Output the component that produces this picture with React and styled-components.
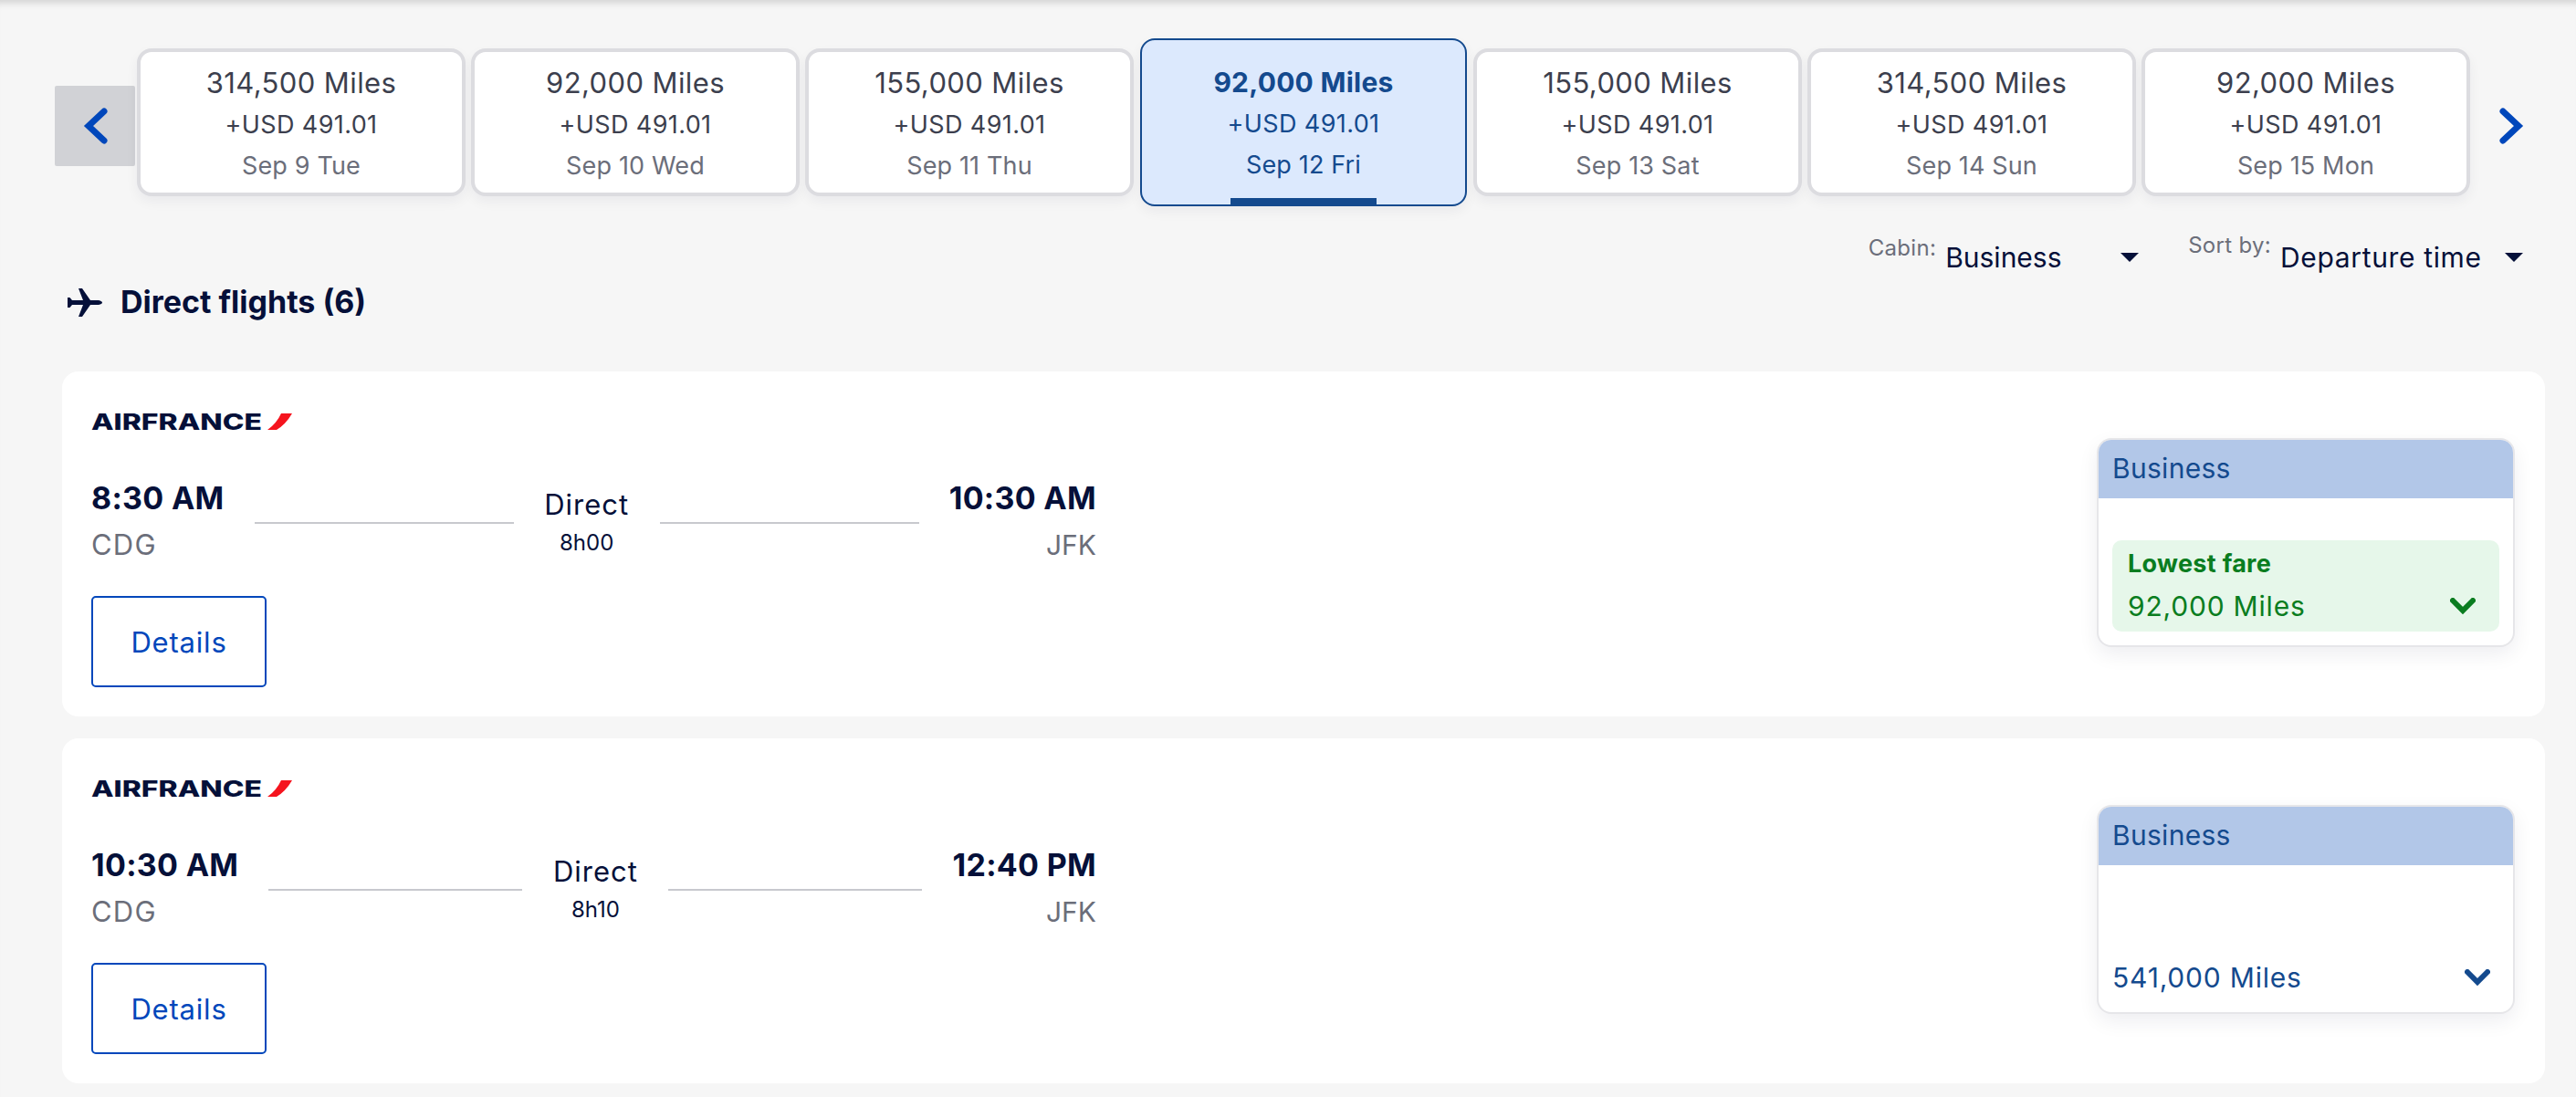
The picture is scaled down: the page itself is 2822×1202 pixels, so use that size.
import React from "react";
import styled, { createGlobalStyle } from "styled-components";

const GlobalStyle = createGlobalStyle`
    * { box-sizing: border-box; }
    html, body { margin: 0; padding: 0; }
    body {
        background: #f6f6f6;
        font-family: Inter, "Noto Sans", "Liberation Sans", sans-serif;
    }
`;

const NAVY = "#051039";
const BLUE = "#0047bb";
const DARK_BLUE = "#144a8e";
const GREEN = "#0a7d20";
const GREY = "#6b6e7a";

const Page = styled.div`
    width: 2822px;
    height: 1202px;
    overflow: hidden;
    padding-top: 42px;
    background: #f6f6f6;
    box-shadow: inset 0 10px 10px -8px rgba(0, 0, 0, 0.18);
`;

const DateStrip = styled.div`
    display: flex;
    align-items: center;
    height: 184px;
    padding-left: 60px;
`;

const PrevButton = styled.div`
    width: 88px;
    height: 88px;
    margin: 8px 2px 0 0;
    background: #d1d2d6;
    border-radius: 2px;
    display: flex;
    align-items: center;
    justify-content: center;
`;

const NextButton = styled.div`
    margin: 8px 0 0 32px;
    display: flex;
`;

const Tiles = styled.div`
    display: flex;
    align-items: center;
    gap: 6px;
`;

const Tile = styled.div`
    position: relative;
    width: ${props => (props.$active ? "358px" : "360px")};
    height: ${props => (props.$active ? "184px" : "162px")};
    margin: ${props => (props.$active ? "0 1px" : "0")};
    padding-top: ${props => (props.$active ? "0" : "2px")};
    background: ${props => (props.$active ? "#dce9fd" : "#ffffff")};
    border: ${props => (props.$active ? `2px solid ${DARK_BLUE}` : "4px solid #dcdce0")};
    border-radius: 16px;
    box-shadow: 0 6px 14px rgba(5, 16, 57, 0.05);
    display: flex;
    flex-direction: column;
    align-items: center;
    justify-content: center;
    color: ${props => (props.$active ? DARK_BLUE : "#3c3f4e")};
`;

const TileMiles = styled.div`
    font-size: ${props => (props.$active ? "30px" : "31px")};
    letter-spacing: ${props => (props.$active ? "0.25px" : "0.4px")};
    line-height: 40px;
    font-weight: ${props => (props.$active ? 700 : 400)};
`;

const TileCash = styled.div`
    font-size: 27px;
    letter-spacing: 0.4px;
    line-height: 36px;
    margin-top: 8px;
`;

const TileDate = styled.div`
    font-size: 27px;
    letter-spacing: 0.15px;
    line-height: 36px;
    margin-top: 9px;
    color: ${props => (props.$active ? DARK_BLUE : GREY)};
`;

const ActiveMark = styled.span`
    position: absolute;
    left: 97px;
    bottom: 0;
    width: 160px;
    height: 7px;
    background: ${DARK_BLUE};
`;

const Toolbar = styled.div`
    display: flex;
    justify-content: flex-end;
    gap: 54px;
    margin-top: 36px;
    padding-right: 58px;
`;

const Control = styled.div`
    display: flex;
    align-items: center;
    height: 40px;
`;

const ControlLabel = styled.span`
    align-self: flex-start;
    margin-top: ${props => props.$raise}px;
    margin-right: 10px;
    font-size: 24px;
    letter-spacing: 0.3px;
    line-height: 24px;
    color: ${GREY};
`;

const ControlValue = styled.span`
    width: ${props => props.$width}px;
    font-size: 30px;
    letter-spacing: ${props => props.$tracking}px;
    line-height: 40px;
    color: ${NAVY};
`;

const Caret = styled.span`
    width: 0;
    height: 0;
    border-left: 10px solid transparent;
    border-right: 10px solid transparent;
    border-top: 10px solid ${NAVY};
`;

const Heading = styled.div`
    display: flex;
    align-items: center;
    gap: 20px;
    margin: 9px 0 0 74px;
    font-size: 34px;
    line-height: 40px;
    font-weight: 700;
    color: ${NAVY};
`;

const FlightList = styled.div`
    display: flex;
    flex-direction: column;
    gap: 24px;
    margin: 56px 34px 0 68px;
`;

const FlightCard = styled.div`
    display: flex;
    justify-content: space-between;
    align-items: flex-start;
    height: 378px;
    padding: 41px 33px 0 32px;
    background: #ffffff;
    border-radius: 18px;
`;

const FlightInfo = styled.div`
    width: 1101px;
`;

const Logo = styled.svg`
    display: block;
    width: 222px;
    height: 28px;
`;

const Schedule = styled.div`
    display: flex;
    align-items: flex-start;
    margin-top: 50px;
`;

const Stop = styled.div`
    text-align: ${props => (props.$end ? "right" : "left")};
`;

const Time = styled.div`
    font-size: 34px;
    letter-spacing: 0.3px;
    line-height: 40px;
    font-weight: 700;
    color: ${NAVY};
`;

const Airport = styled.div`
    margin-top: 13px;
    font-size: ${props => (props.$end ? "30px" : "31px")};
    letter-spacing: ${props => (props.$end ? "0" : "1.2px")};
    line-height: 36px;
    color: ${GREY};
`;

const Route = styled.span`
    flex: 1;
    height: 2px;
    margin: 46px 33px 0;
    background: #c8c9ce;
`;

const Duration = styled.div`
    width: 160px;
    margin: 0 -33px;
    padding-top: 9px;
    text-align: center;
    color: ${NAVY};
`;

const DirectLabel = styled.div`
    font-size: 31px;
    letter-spacing: 1px;
    line-height: 36px;
`;

const DurationValue = styled.div`
    margin-top: 9px;
    font-size: 24px;
    line-height: 30px;
`;

const DetailsButton = styled.div`
    width: 192px;
    height: 100px;
    margin-top: 38px;
    border: 2.5px solid ${BLUE};
    border-radius: 5px;
    display: flex;
    align-items: center;
    justify-content: center;
    font-size: 31px;
    letter-spacing: 0.8px;
    color: ${BLUE};
`;

const FareCard = styled.div`
    width: 458px;
    height: 229px;
    margin-top: 32px;
    display: flex;
    flex-direction: column;
    background: #ffffff;
    border: 2px solid #e6e6e9;
    border-radius: 16px;
    overflow: hidden;
    box-shadow: 0 8px 22px rgba(5, 16, 57, 0.07);
`;

const FareHeader = styled.div`
    height: 64px;
    padding-left: 15px;
    background: #b2c7e8;
    font-size: 30px;
    letter-spacing: 0.3px;
    line-height: 63px;
    color: ${DARK_BLUE};
`;

const FareBody = styled.div`
    flex: 1;
    display: flex;
    flex-direction: column;
    justify-content: flex-end;
    padding: 0 15px 15px;
`;

const FareOption = styled.div`
    border-radius: 10px;
    background: ${props => (props.$lowest ? "#e6f7ea" : "transparent")};
    padding: ${props => (props.$lowest ? "8px 26px 8px 17px" : "0 10px 3px 0")};
    color: ${props => (props.$lowest ? GREEN : DARK_BLUE)};
`;

const FareLabel = styled.div`
    font-size: 27px;
    letter-spacing: 0.3px;
    line-height: 36px;
    font-weight: 700;
    margin-bottom: 8px;
`;

const FareRow = styled.div`
    display: flex;
    justify-content: space-between;
    align-items: center;
    font-size: 30px;
    letter-spacing: 0.8px;
    line-height: 40px;
`;

function Chevron({ direction }) {
    const points = direction === "left" ? "23,4 6,20 23,36" : "4,4 21,20 4,36";
    return (
        <svg width="27" height="40" viewBox="0 0 27 40" fill="none">
            <polyline points={points} stroke={BLUE} strokeWidth="7" strokeLinecap="round" strokeLinejoin="miter" />
        </svg>
    );
}

function ChevronDown() {
    return (
        <svg width="28" height="18" viewBox="0 0 28 18" fill="none">
            <polyline points="3,3 14,14 25,3" stroke="currentColor" strokeWidth="6" strokeLinecap="round" />
        </svg>
    );
}

function PlaneIcon() {
    return (
        <svg width="38" height="31" viewBox="0 0 38 31" fill={NAVY}>
            <path d="M0 10 L2.5 10 L5 13 L17 13 L12 0 L16 0 L25 13 L34 13 Q38 14 38 15.5 Q38 17 34 18 L25 18 L16 31 L12 31 L17 18 L5 18 L2.5 21 L0 21 Z" />
        </svg>
    );
}

function AirFranceLogo() {
    return (
        <Logo viewBox="0 0 222 28">
            <text
                x="0"
                y="23"
                textLength="187"
                lengthAdjust="spacingAndGlyphs"
                fontFamily="Inter, sans-serif"
                fontWeight="800"
                fontSize="24"
                fill={NAVY}
            >
                AIRFRANCE
            </text>
            <path d="M208 5 L220 5 Q213 17 203 23 L193 23 Q203 16 208 5 Z" fill="#f5141e" />
        </Logo>
    );
}

const tiles = [
    { miles: "314,500 Miles", date: "Sep 9 Tue" },
    { miles: "92,000 Miles", date: "Sep 10 Wed" },
    { miles: "155,000 Miles", date: "Sep 11 Thu" },
    { miles: "92,000 Miles", date: "Sep 12 Fri", active: true },
    { miles: "155,000 Miles", date: "Sep 13 Sat" },
    { miles: "314,500 Miles", date: "Sep 14 Sun" },
    { miles: "92,000 Miles", date: "Sep 15 Mon" },
];

const flights = [
    { depart: "8:30 AM", arrive: "10:30 AM", duration: "8h00", miles: "92,000 Miles", lowest: true },
    { depart: "10:30 AM", arrive: "12:40 PM", duration: "8h10", miles: "541,000 Miles", lowest: false },
];

export default function App() {
    return (
        <Page>
            <GlobalStyle />
            <DateStrip>
                <PrevButton>
                    <Chevron direction="left" />
                </PrevButton>
                <Tiles>
                    {tiles.map(tile => (
                        <Tile key={tile.date} $active={tile.active}>
                            <TileMiles $active={tile.active}>{tile.miles}</TileMiles>
                            <TileCash>+USD 491.01</TileCash>
                            <TileDate $active={tile.active}>{tile.date}</TileDate>
                            {tile.active && <ActiveMark />}
                        </Tile>
                    ))}
                </Tiles>
                <NextButton>
                    <Chevron direction="right" />
                </NextButton>
            </DateStrip>

            <Toolbar>
                <Control>
                    <ControlLabel $raise={-2}>Cabin:</ControlLabel>
                    <ControlValue $width={192} $tracking={0}>Business</ControlValue>
                    <Caret />
                </Control>
                <Control>
                    <ControlLabel $raise={-5}>Sort by:</ControlLabel>
                    <ControlValue $width={246} $tracking={0.65}>Departure time</ControlValue>
                    <Caret />
                </Control>
            </Toolbar>

            <Heading>
                <PlaneIcon />
                Direct flights (6)
            </Heading>

            <FlightList>
                {flights.map(flight => (
                    <FlightCard key={flight.depart}>
                        <FlightInfo>
                            <AirFranceLogo />
                            <Schedule>
                                <Stop>
                                    <Time>{flight.depart}</Time>
                                    <Airport>CDG</Airport>
                                </Stop>
                                <Route />
                                <Duration>
                                    <DirectLabel>Direct</DirectLabel>
                                    <DurationValue>{flight.duration}</DurationValue>
                                </Duration>
                                <Route />
                                <Stop $end>
                                    <Time>{flight.arrive}</Time>
                                    <Airport $end>JFK</Airport>
                                </Stop>
                            </Schedule>
                            <DetailsButton>Details</DetailsButton>
                        </FlightInfo>
                        <FareCard>
                            <FareHeader>Business</FareHeader>
                            <FareBody>
                                <FareOption $lowest={flight.lowest}>
                                    {flight.lowest && <FareLabel>Lowest fare</FareLabel>}
                                    <FareRow>
                                        {flight.miles}
                                        <ChevronDown />
                                    </FareRow>
                                </FareOption>
                            </FareBody>
                        </FareCard>
                    </FlightCard>
                ))}
            </FlightList>
        </Page>
    );
}
